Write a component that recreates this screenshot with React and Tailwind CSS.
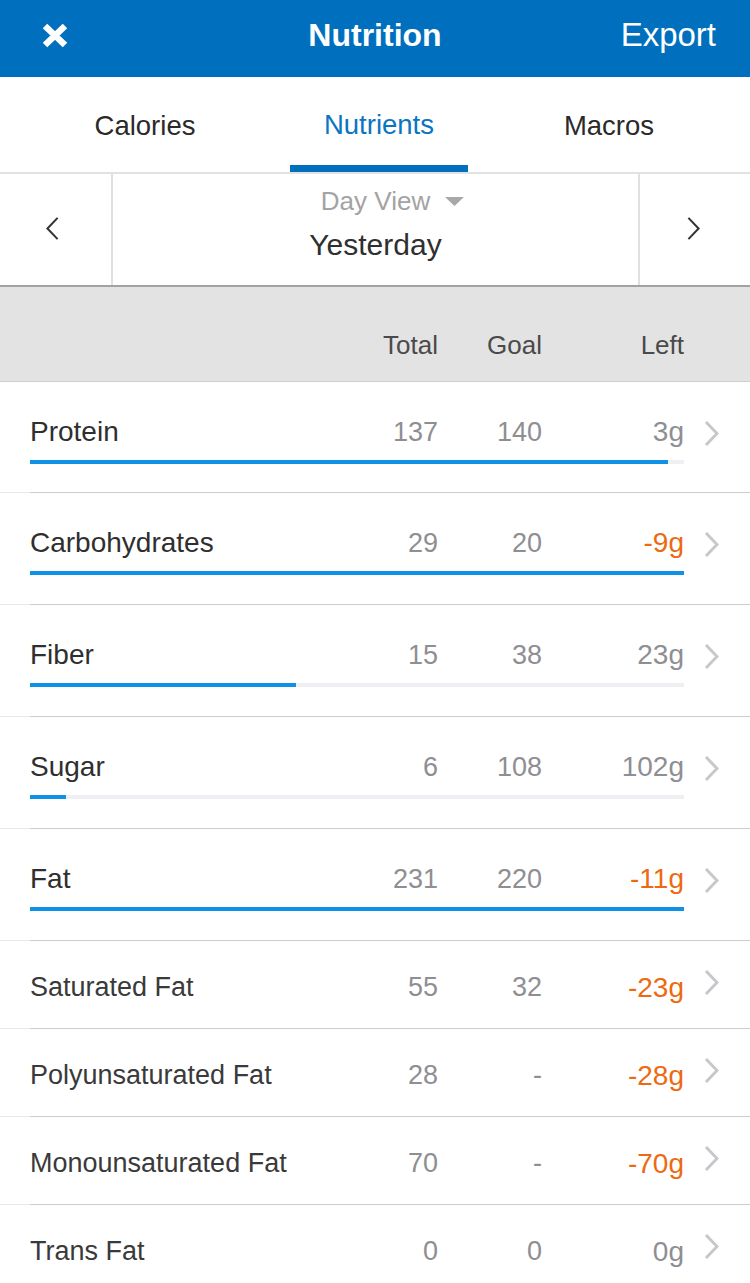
import React from "react";

const font = { fontFamily: '"Liberation Sans", Arial, Helvetica, sans-serif' };

function Chevron({ dir = "right", className = "", stroke = "#c7c7cc", width = 3 }) {
  const pts = dir === "right" ? "2,2 13,13.5 2,25" : "13,2 2,13.5 13,25";
  return (
    <svg viewBox="0 0 15 27" className={className} fill="none">
      <polyline points={pts} stroke={stroke} strokeWidth={width} strokeLinejoin="miter" />
    </svg>
  );
}

const main = [
  { name: "Protein", total: "137", goal: "140", left: "3g", neg: false, pct: 97.6, h: "h-[110px]" },
  { name: "Carbohydrates", total: "29", goal: "20", left: "-9g", neg: true, pct: 100, h: "h-[111px]" },
  { name: "Fiber", total: "15", goal: "38", left: "23g", neg: false, pct: 40.7, h: "h-[111px]" },
  { name: "Sugar", total: "6", goal: "108", left: "102g", neg: false, pct: 5.5, h: "h-[111px]" },
  { name: "Fat", total: "231", goal: "220", left: "-11g", neg: true, pct: 100, h: "h-[111px]" },
];

const sub = [
  { name: "Saturated Fat", total: "55", goal: "32", left: "-23g", neg: true },
  { name: "Polyunsaturated Fat", total: "28", goal: "-", left: "-28g", neg: true },
  { name: "Monounsaturated Fat", total: "70", goal: "-", left: "-70g", neg: true },
  { name: "Trans Fat", total: "0", goal: "0", left: "0g", neg: false },
];

function Separator() {
  return (
    <div className="flex h-px">
      <div className="w-[30px] bg-[#e8e8e8]" />
      <div className="flex-1 bg-[#cdcdd1]" />
    </div>
  );
}

function Numbers({ r }) {
  return (
    <>
      <div className="w-[100px] text-right text-[27px] text-[#8e8e93]">{r.total}</div>
      <div className="w-[104px] text-right text-[27px] text-[#8e8e93]">{r.goal}</div>
      <div className={`w-[142px] text-right text-[28px] ${r.neg ? "text-[#ec6a12]" : "text-[#8e8e93]"}`}>{r.left}</div>
    </>
  );
}

function MainRow({ r }) {
  return (
    <>
      <div className={`flex ${r.h} bg-white`}>
        <div className="flex w-[684px] flex-col pl-[30px] pt-[34px]">
          <div className="flex h-[32px] items-center leading-none">
            <div className="flex-1 text-[28px] text-[#2f2f2f]">{r.name}</div>
            <Numbers r={r} />
          </div>
          <div className="mt-[12px] h-[4px] bg-[#efeff4]">
            <div className="h-full bg-[#0f91e6]" style={{ width: `${r.pct}%` }} />
          </div>
        </div>
        <div className="flex flex-1 items-start pl-[20px] pt-[38px]">
          <Chevron className="h-[27px] w-[15px]" />
        </div>
      </div>
      <Separator />
    </>
  );
}

function SubRow({ r }) {
  return (
    <>
      <div className="flex h-[87px] items-center bg-white">
        <div className="flex w-[684px] items-center pl-[30px] leading-none pt-[6px]">
          <div className="flex-1 text-[27px] text-[#3a3a3a]">{r.name}</div>
          <Numbers r={r} />
        </div>
        <div className="flex flex-1 items-center pl-[20px] pb-[4px]">
          <Chevron className="h-[27px] w-[15px]" />
        </div>
      </div>
      <Separator />
    </>
  );
}

export default function App() {
  return (
    <div className="h-[1283px] w-[750px] overflow-hidden bg-white" style={font}>
      {/* Top bar */}
      <div className="grid h-[77px] grid-cols-[150px_1fr_150px] items-center bg-[#0070be] pb-[8px] text-white">
        <div className="flex items-center pl-[42px] pt-[2px]">
          <svg viewBox="0 0 26 25" className="h-[25px] w-[26px]">
            <path d="M3 3 L23 22 M23 3 L3 22" stroke="white" strokeWidth="6.5" strokeLinecap="butt" />
          </svg>
        </div>
        <div className="text-center text-[32px] font-bold leading-none">Nutrition</div>
        <div className="pr-[34px] text-right text-[33px] leading-none whitespace-nowrap">Export</div>
      </div>

      {/* Tabs */}
      <div className="grid h-[95px] grid-cols-[290px_178px_282px] bg-white text-[27.5px] leading-none">
        <div className="flex items-center justify-center pt-[3px] text-[#2a2a2a]">Calories</div>
        <div className="flex flex-col">
          <div className="flex flex-1 items-center justify-center pt-[8px] text-[#0a75c2]">Nutrients</div>
          <div className="h-[7px] bg-[#0070be]" />
        </div>
        <div className="flex items-center justify-center pt-[3px] text-[#2a2a2a]">Macros</div>
      </div>
      <div className="h-[2px] bg-[#e2e2e2]" />

      {/* Day navigation */}
      <div className="flex h-[111px] bg-white">
        <div className="flex w-[111px] items-center justify-center pr-[6px] pb-[2px]">
          <Chevron dir="left" stroke="#333" width={2.2} className="h-[25px] w-[15px]" />
        </div>
        <div className="w-[2px] bg-[#e0e0e0]" />
        <div className="flex flex-1 flex-col items-center pt-[14px]">
          <div className="relative text-[26px] leading-none text-[#a3a3a3]">
            <span>Day View</span>
            <svg viewBox="0 0 19 9" className="absolute left-[calc(100%+15px)] top-[9px] h-[9px] w-[19px]">
              <polygon points="0,0 19,0 9.5,9" fill="#a8a8a8" />
            </svg>
          </div>
          <div className="mt-[16px] text-[30px] leading-none text-[#2f2f2f]">Yesterday</div>
        </div>
        <div className="w-[2px] bg-[#e0e0e0]" />
        <div className="flex w-[110px] items-center justify-center pr-[4px] pb-[2px]">
          <Chevron dir="right" stroke="#333" width={2.2} className="h-[25px] w-[15px]" />
        </div>
      </div>
      <div className="h-[2px] bg-[#a2a2a2]" />

      {/* Column header */}
      <div className="flex h-[94px] items-end bg-[#e3e3e3] pb-[23px] text-[26px] leading-none text-[#4a4a4a]">
        <div className="flex w-[684px] pl-[30px]">
          <div className="flex-1" />
          <div className="w-[100px] text-right">Total</div>
          <div className="w-[104px] text-right">Goal</div>
          <div className="w-[142px] text-right">Left</div>
        </div>
      </div>
      <div className="h-px bg-[#cfcfcf]" />

      {main.map((r) => (
        <MainRow key={r.name} r={r} />
      ))}
      {sub.map((r) => (
        <SubRow key={r.name} r={r} />
      ))}
    </div>
  );
}
